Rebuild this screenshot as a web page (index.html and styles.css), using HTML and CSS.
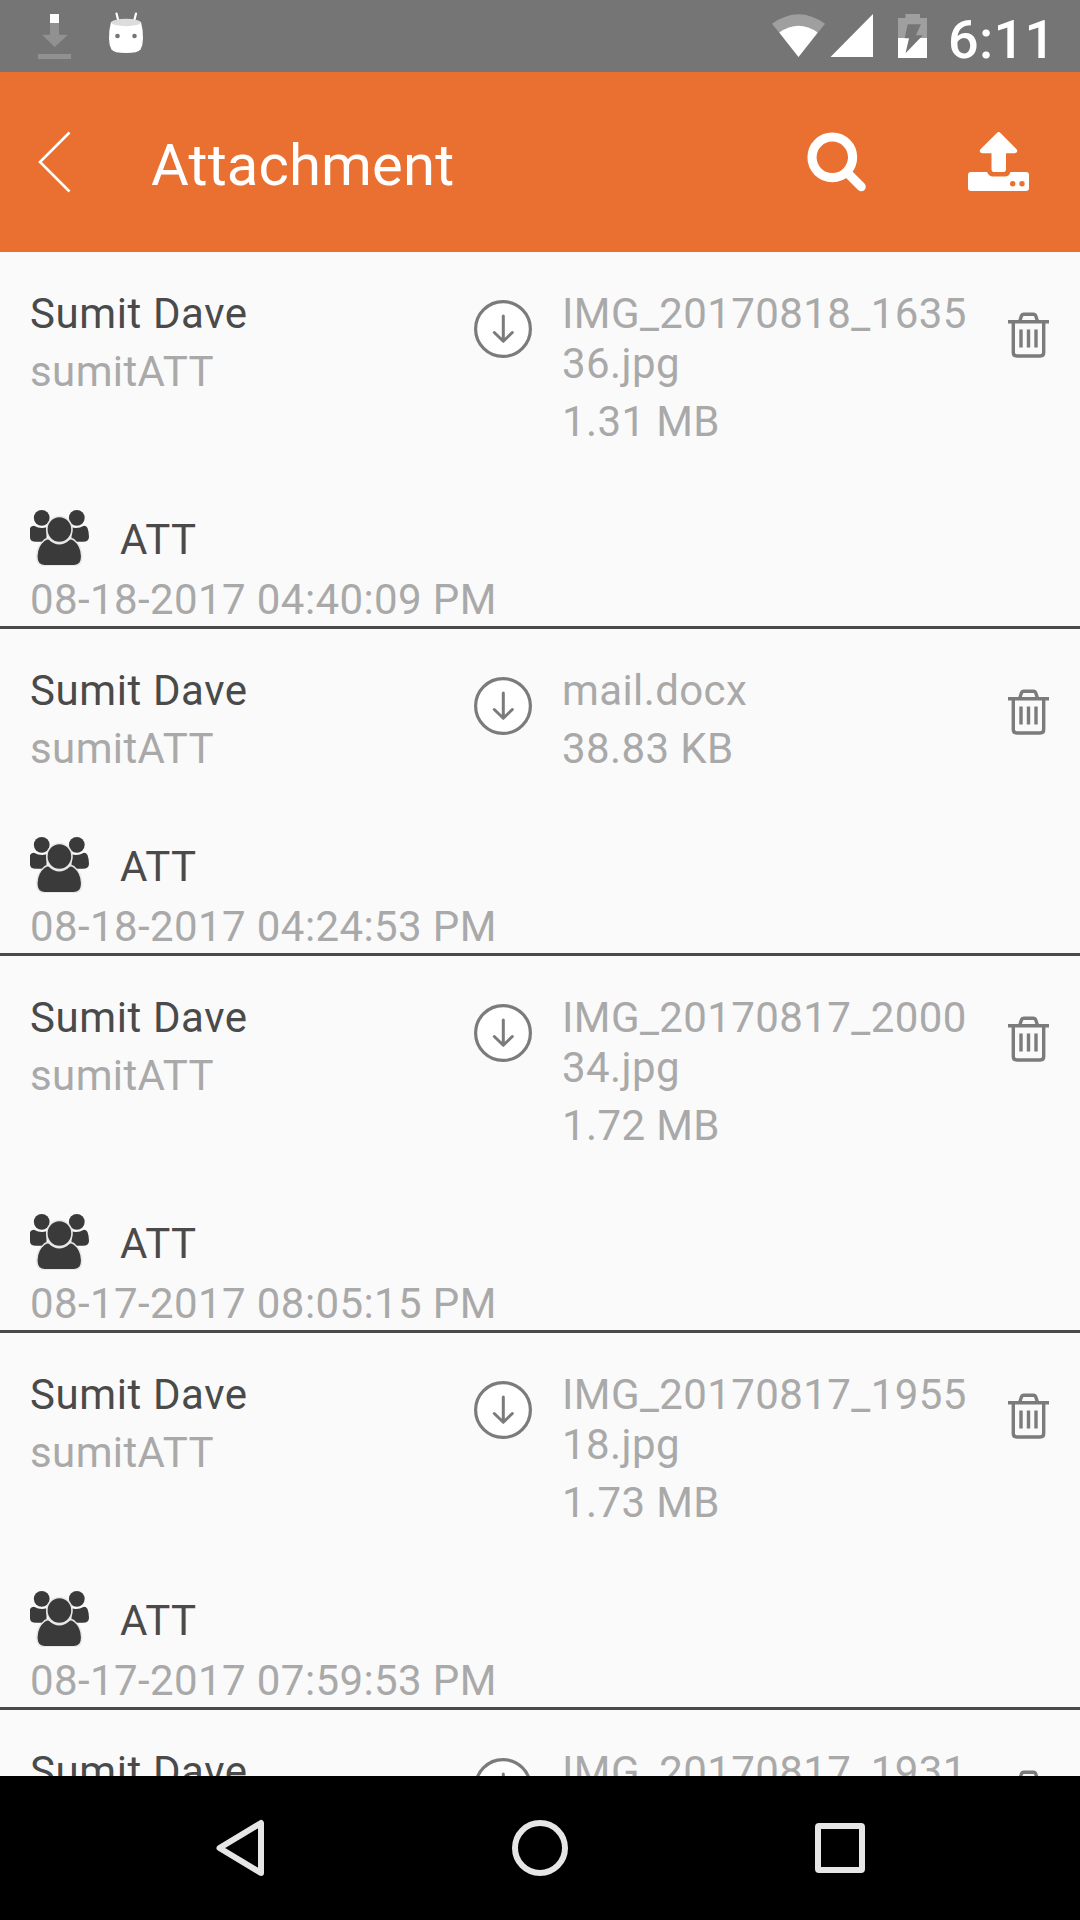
FILE: index.html
```html
<!DOCTYPE html>
<html lang="en">
<head>
    <meta charset="UTF-8">
    <title>Attachment</title>
    <link rel="stylesheet" href="styles.css">
</head>
<body>
    <!-- shared icons for the list rows -->
    <svg class="icon-defs">
        <symbol id="icon-download" viewBox="0 0 58 58">
            <circle cx="29" cy="29" r="27.4" fill="#fff" stroke="#7b7b7b" stroke-width="3.2"/>
            <path d="M29.3 16v25M20.3 32.5l9 8.8 9-8.8" fill="none" stroke="#7b7b7b" stroke-width="3" stroke-linecap="round" stroke-linejoin="round"/>
        </symbol>
        <symbol id="icon-trash" viewBox="0 0 42 46">
            <path d="M0 9.7h41M5.3 10v30.5q0 3.5 3.5 3.5h23.4q3.5 0 3.5-3.5V10M11.8 9l1.6-5q.6-1.8 2.4-1.8h9.6q1.8 0 2.4 1.8l1.6 5" fill="none" stroke="#7b7b7b" stroke-width="3.4"/>
            <path d="M13 17.5v18M20.5 17.5v18M28 17.5v18" fill="none" stroke="#7b7b7b" stroke-width="3.4"/>
        </symbol>
        <symbol id="icon-group" viewBox="0 0 60 60">
            <g fill="#3a3a3a">
                <circle cx="11.7" cy="11.8" r="7.9"/>
                <circle cx="46.8" cy="11.8" r="7.9"/>
                <path d="M0 22q1.5-2.300 4-2.300 6.500 3.500 12.500 1.500v14.500H6Q0 35.700 0 31.500z"/>
                <path d="M57.500 22q-1.200-2.300-3.500-2.300-6.500 3.500-12.500 1.500v14.500H53q6 0 6-5 0-4.500-1.500-8.700z"/>
            </g>
            <g fill="#3a3a3a" stroke="#e8e8e8" stroke-width="1.600">
                <path d="M14.500 34q2.300-1.700 4.500-1.100 10.300 9.600 20.600 0 2.200-.6 4.500 1.100Q51.500 40 51.700 50q.3 9.700-7.700 9.700H14.500q-8 0-7.700-9.700Q7 40 14.500 34z"/>
                <ellipse cx="29.400" cy="23.500" rx="12.600" ry="13"/>
            </g>
        </symbol>
    </svg>

    <div class="screen">
        <div class="status-bar">
            <svg class="status-download" viewBox="38 0 33 72">
                <path d="M50 14h9v9h-9z" fill="#fff"/>
                <path d="M50 23h9v11.700h9L54.700 47 42 34.700h8zM38 54h33v5H38z" fill="#919191"/>
            </svg>
            <svg class="status-android" viewBox="109 0 35 72">
                <path d="M116.500 13.500l2 8M136 13.500l-2 8" stroke="#fff" stroke-width="2.200" stroke-linecap="round"/>
                <path d="M111 22q15-4 30 0 2 7 2 16.500 0 6.500-2.500 11-2.500 3.500-14.500 3.500t-14.500-3.500q-2.500-4.500-2.500-11Q109 29 111 22z" fill="#fff"/>
                <ellipse cx="126" cy="22.500" rx="14.800" ry="3.700" fill="#dcdcdc"/>
                <circle cx="117.500" cy="36" r="2.300" fill="#757575"/>
                <circle cx="134.500" cy="36" r="2.300" fill="#757575"/>
            </svg>
            <div class="status-right">
                <svg class="status-wifi" viewBox="772 0 53 72">
                    <path d="M772 23.700q26.500-19 53 0L798.500 57z" fill="#9f9f9f"/>
                    <path d="M779.300 32.500q19.200-13.500 38.400 0L798.500 57z" fill="#fff"/>
                </svg>
                <svg class="status-signal" viewBox="830 0 43 72">
                    <path d="M873 14v43h-42.500z" fill="#fff"/>
                </svg>
                <svg class="status-battery" viewBox="898 0 29 72">
                    <path d="M898 18h7.500v-4H920v4h7v20h-29z" fill="#9f9f9f"/>
                    <path d="M898 38h29v20h-29z" fill="#fff"/>
                    <path d="M907.700 24.300h13.200l-5 11h7L905.500 53.300l3.500-15h-4.300z" fill="#757575"/>
                </svg>
                <span class="clock">6:11</span>
            </div>
        </div>

        <div class="app-bar">
            <svg class="back" viewBox="38 130 33 64">
                <path d="M69.500 132.500L40 162l29.500 29.500" fill="none" stroke="#fff" stroke-width="2.600"/>
            </svg>
            <h1>Attachment</h1>
            <svg class="search" viewBox="807 130 60 64">
                <circle cx="832.300" cy="157.300" r="20.300" fill="none" stroke="#fff" stroke-width="9.200"/>
                <path d="M848 173.500l13.300 13.300" stroke="#fff" stroke-width="9" stroke-linecap="round"/>
            </svg>
            <svg class="upload" viewBox="968 130 62 64">
                <path d="M996.900 133q1.800-1.800 3.600 0l16.300 16.500q1.500 3.600-2 3.700H1006v16q0 2.800-3 2.800h-8.500q-3 0-3-2.800v-16h-9.300q-3.500-.1-2-3.700z" fill="#fff"/>
                <path d="M971 172h16q2 4.600 6 4.600h12q4 0 5.500-4.600h15.500q3 0 3 3v13q0 3-3 3h-55q-3 0-3-3v-13q0-3 3-3z" fill="#fff"/>
                <circle cx="1012.700" cy="183.700" r="2.700" fill="#ea7031"/>
                <circle cx="1022" cy="183.700" r="2.700" fill="#ea7031"/>
            </svg>
        </div>

        <div class="list">
            <div class="row">
                <div class="info">
                    <div class="user">
                        <p class="name">Sumit Dave</p>
                        <p>sumitATT</p>
                    </div>
                    <svg class="download"><use href="#icon-download"/></svg>
                    <div class="file">
                        <p>IMG_20170818_163536.jpg</p>
                        <p>1.31 MB</p>
                    </div>
                    <svg class="trash"><use href="#icon-trash"/></svg>
                </div>
                <div class="group">
                    <svg class="people"><use href="#icon-group"/></svg>
                    <span>ATT</span>
                </div>
                <p class="date">08-18-2017 04:40:09 PM</p>
            </div>

            <div class="row">
                <div class="info">
                    <div class="user">
                        <p class="name">Sumit Dave</p>
                        <p>sumitATT</p>
                    </div>
                    <svg class="download"><use href="#icon-download"/></svg>
                    <div class="file">
                        <p>mail.docx</p>
                        <p>38.83 KB</p>
                    </div>
                    <svg class="trash"><use href="#icon-trash"/></svg>
                </div>
                <div class="group">
                    <svg class="people"><use href="#icon-group"/></svg>
                    <span>ATT</span>
                </div>
                <p class="date">08-18-2017 04:24:53 PM</p>
            </div>

            <div class="row">
                <div class="info">
                    <div class="user">
                        <p class="name">Sumit Dave</p>
                        <p>sumitATT</p>
                    </div>
                    <svg class="download"><use href="#icon-download"/></svg>
                    <div class="file">
                        <p>IMG_20170817_200034.jpg</p>
                        <p>1.72 MB</p>
                    </div>
                    <svg class="trash"><use href="#icon-trash"/></svg>
                </div>
                <div class="group">
                    <svg class="people"><use href="#icon-group"/></svg>
                    <span>ATT</span>
                </div>
                <p class="date">08-17-2017 08:05:15 PM</p>
            </div>

            <div class="row">
                <div class="info">
                    <div class="user">
                        <p class="name">Sumit Dave</p>
                        <p>sumitATT</p>
                    </div>
                    <svg class="download"><use href="#icon-download"/></svg>
                    <div class="file">
                        <p>IMG_20170817_195518.jpg</p>
                        <p>1.73 MB</p>
                    </div>
                    <svg class="trash"><use href="#icon-trash"/></svg>
                </div>
                <div class="group">
                    <svg class="people"><use href="#icon-group"/></svg>
                    <span>ATT</span>
                </div>
                <p class="date">08-17-2017 07:59:53 PM</p>
            </div>

            <div class="row">
                <div class="info">
                    <div class="user">
                        <p class="name">Sumit Dave</p>
                    </div>
                    <svg class="download"><use href="#icon-download"/></svg>
                    <div class="file">
                        <p>IMG_20170817_1931</p>
                    </div>
                    <svg class="trash"><use href="#icon-trash"/></svg>
                </div>
            </div>
        </div>

        <div class="nav-bar">
            <svg viewBox="0 0 60 60">
                <path d="M51 5v50L9.500 30z" fill="none" stroke="#e6e6e6" stroke-width="6" stroke-linejoin="round"/>
            </svg>
            <svg viewBox="0 0 60 60">
                <circle cx="30" cy="30" r="25" fill="none" stroke="#e6e6e6" stroke-width="6"/>
            </svg>
            <svg viewBox="0 0 60 60">
                <rect x="8" y="8" width="44" height="44" rx="1" fill="none" stroke="#e6e6e6" stroke-width="6"/>
            </svg>
        </div>
    </div>
</body>
</html>
```
FILE: styles.css
```css
body {
    margin: 0;
    font-family: Roboto, sans-serif;
    background-color: #fafafa;
}
svg {
    display: block;
    flex-shrink: 0;
}
p, h1 {
    margin: 0;
    font-weight: normal;
}
.icon-defs {
    display: none;
}
.screen {
    display: flex;
    flex-direction: column;
    width: 1080px;
    height: 1920px;
    overflow: hidden;
}

/* status bar */
.status-bar {
    display: flex;
    flex-shrink: 0;
    height: 72px;
    padding: 0 33px 0 38px;
    background-color: #757575;
}
.status-bar svg {
    height: 72px;
}
.status-download {
    width: 33px;
    margin-right: 38px;
}
.status-android {
    width: 35px;
}
.status-right {
    display: flex;
    margin-left: auto;
}
.status-wifi {
    width: 53px;
    margin-right: 5px;
}
.status-signal {
    width: 43px;
    margin-right: 25px;
}
.status-battery {
    width: 29px;
    margin-right: 21px;
}
.clock {
    width: 99px;
    font-size: 54px;
    font-weight: 500;
    line-height: 79px;
    letter-spacing: 0.3px;
    color: #fff;
}

/* app bar */
.app-bar {
    display: flex;
    align-items: center;
    flex-shrink: 0;
    box-sizing: border-box;
    height: 180px;
    padding: 0 50px 0 38px;
    background-color: #ea7031;
}
.app-bar svg {
    height: 64px;
}
.back {
    width: 33px;
}
.app-bar h1 {
    flex: 1;
    margin: 6px 0 0 80px;
    font-size: 58px;
    letter-spacing: 0.15px;
    color: #fff;
}
.search {
    width: 60px;
    margin-right: 101px;
}
.upload {
    width: 62px;
}

/* attachments */
.list {
    flex: 1;
    min-height: 0;
    overflow: hidden;
}
.row {
    padding: 37px 30px 1px;
    border-bottom: 3px solid #4a4a4a;
    font-size: 42px;
    line-height: 50px;
    letter-spacing: 0.4px;
    color: #a9a9a9;
}
.info {
    display: flex;
    align-items: flex-start;
}
.user {
    width: 444px;
}
.user p + p, .file p + p {
    margin-top: 8px;
}
.name, .group {
    color: #4a4a4a;
}
.name {
    letter-spacing: 0.6px;
}
.download {
    width: 58px;
    height: 58px;
    margin-top: 11px;
}
.file {
    width: 416px;
    margin-left: 30px;
    word-break: break-all;
}
.trash {
    width: 42px;
    height: 46px;
    margin: 23px 0 0 30px;
}
.group {
    display: flex;
    align-items: center;
    height: 60px;
    margin-top: 59px;
}
.group span {
    margin: 8px 0 0 30px;
}
.people {
    width: 60px;
    height: 60px;
}
.date {
    margin-top: 9px;
}

/* navigation */
.nav-bar {
    display: flex;
    align-items: center;
    justify-content: center;
    gap: 240px;
    flex-shrink: 0;
    height: 144px;
    background-color: #000;
}
.nav-bar svg {
    width: 60px;
    height: 60px;
}
```
